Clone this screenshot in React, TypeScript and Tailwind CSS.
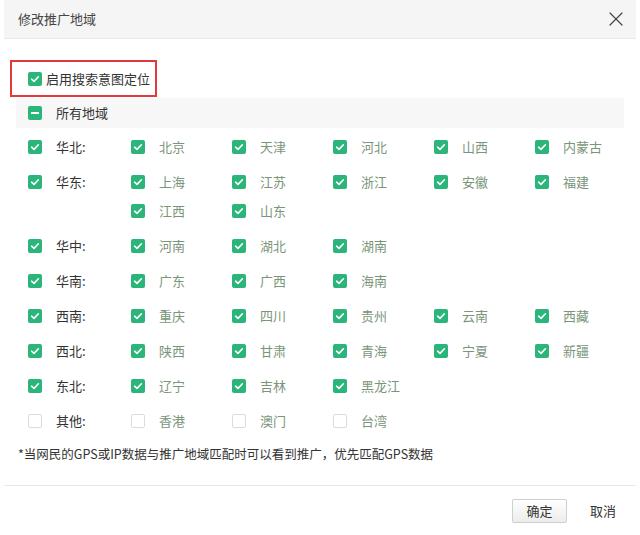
import { X } from "lucide-react";

type Prov = { name: string; checked: boolean };
type Region = { name: string; checked: boolean; provinces: Prov[] };

const on = (name: string): Prov => ({ name, checked: true });
const off = (name: string): Prov => ({ name, checked: false });

const regions: Region[] = [
  { name: "华北", checked: true, provinces: ["北京", "天津", "河北", "山西", "内蒙古"].map(on) },
  { name: "华东", checked: true, provinces: ["上海", "江苏", "浙江", "安徽", "福建", "江西", "山东"].map(on) },
  { name: "华中", checked: true, provinces: ["河南", "湖北", "湖南"].map(on) },
  { name: "华南", checked: true, provinces: ["广东", "广西", "海南"].map(on) },
  { name: "西南", checked: true, provinces: ["重庆", "四川", "贵州", "云南", "西藏"].map(on) },
  { name: "西北", checked: true, provinces: ["陕西", "甘肃", "青海", "宁夏", "新疆"].map(on) },
  { name: "东北", checked: true, provinces: ["辽宁", "吉林", "黑龙江"].map(on) },
  { name: "其他", checked: false, provinces: ["香港", "澳门", "台湾"].map(off) },
];

function Check({ checked, minus }: { checked?: boolean; minus?: boolean }) {
  if (!checked && !minus) {
    return <span className="block w-[14px] h-[14px] shrink-0 rounded-[2px] border border-[#dcdcdc] bg-white" />;
  }
  return (
    <span className="flex w-[14px] h-[14px] shrink-0 items-center justify-center rounded-[2px] bg-[#2bb57a]">
      {minus ? (
        <span className="block w-[8px] h-[2px] bg-white" />
      ) : (
        <svg viewBox="0 0 14 14" className="w-[14px] h-[14px]">
          <path d="M3.6 7.2 L6 9.4 L10.4 4.8" fill="none" stroke="white" strokeWidth="1.6" strokeLinecap="round" strokeLinejoin="round" />
        </svg>
      )}
    </span>
  );
}

export default function App() {
  return (
    <div
      className="w-[640px] h-[535px] bg-white text-[13px] text-[#333] flex flex-col"
      style={{ fontFamily: '"Noto Sans CJK SC", "Noto Sans", sans-serif' }}
    >
      {/* Header */}
      <div className="mx-[4px] h-[39px] shrink-0 bg-[#f5f5f5] border-b border-[#e8e8e8] flex items-center justify-between pl-[14px] pr-[8px]">
        <span className="text-[13px] text-[#444]">修改推广地域</span>
        <X className="w-[24px] h-[24px] text-[#444]" strokeWidth={1.2} />
      </div>

      {/* Body */}
      <div className="flex-1 flex flex-col">
        <div className="mt-[21px] ml-[10px] w-[147px] h-[37px] border-2 border-[#e0393e] flex items-center gap-[4px] pl-[16px]">
          <Check checked />
          <span className="text-[13px] text-[#333]">启用搜索意图定位</span>
        </div>

        <div className="mx-[16px] mt-[1px] h-[30px] bg-[#f7f7f7] flex items-center gap-[14px] pl-[12px]">
          <Check minus />
          <span>所有地域</span>
        </div>

        <div className="mt-[1px] pl-[28px] flex flex-col">
          {regions.map((r) => (
            <div key={r.name} className="flex py-[3px]">
              <div className="w-[103px] h-[29px] shrink-0 flex items-center gap-[14px]">
                <Check checked={r.checked} />
                <span className="text-[#333]">{r.name}:</span>
              </div>
              <div className="flex flex-wrap w-[505px]">
                {r.provinces.map((p) => (
                  <div key={p.name} className="w-[101px] h-[29px] flex items-center gap-[14px]">
                    <Check checked={p.checked} />
                    <span className="text-[#7a957a]">{p.name}</span>
                  </div>
                ))}
              </div>
            </div>
          ))}
        </div>

        <div className="mt-[7px] pl-[18px] text-[12.5px] text-[#333]">
          *当网民的GPS或IP数据与推广地域匹配时可以看到推广，优先匹配GPS数据
        </div>
      </div>

      {/* Footer */}
      <div className="mx-[4px] h-[50px] shrink-0 border-t border-[#e8e8e8] flex items-center justify-end pr-[20px] gap-[23px]">
        <button className="w-[55px] h-[24px] border border-[#cfcfcf] rounded-[2px] bg-gradient-to-b from-white to-[#ececec] text-[13px] text-[#333]">
          确定
        </button>
        <span className="text-[13px] text-[#333]">取消</span>
      </div>
    </div>
  );
}
